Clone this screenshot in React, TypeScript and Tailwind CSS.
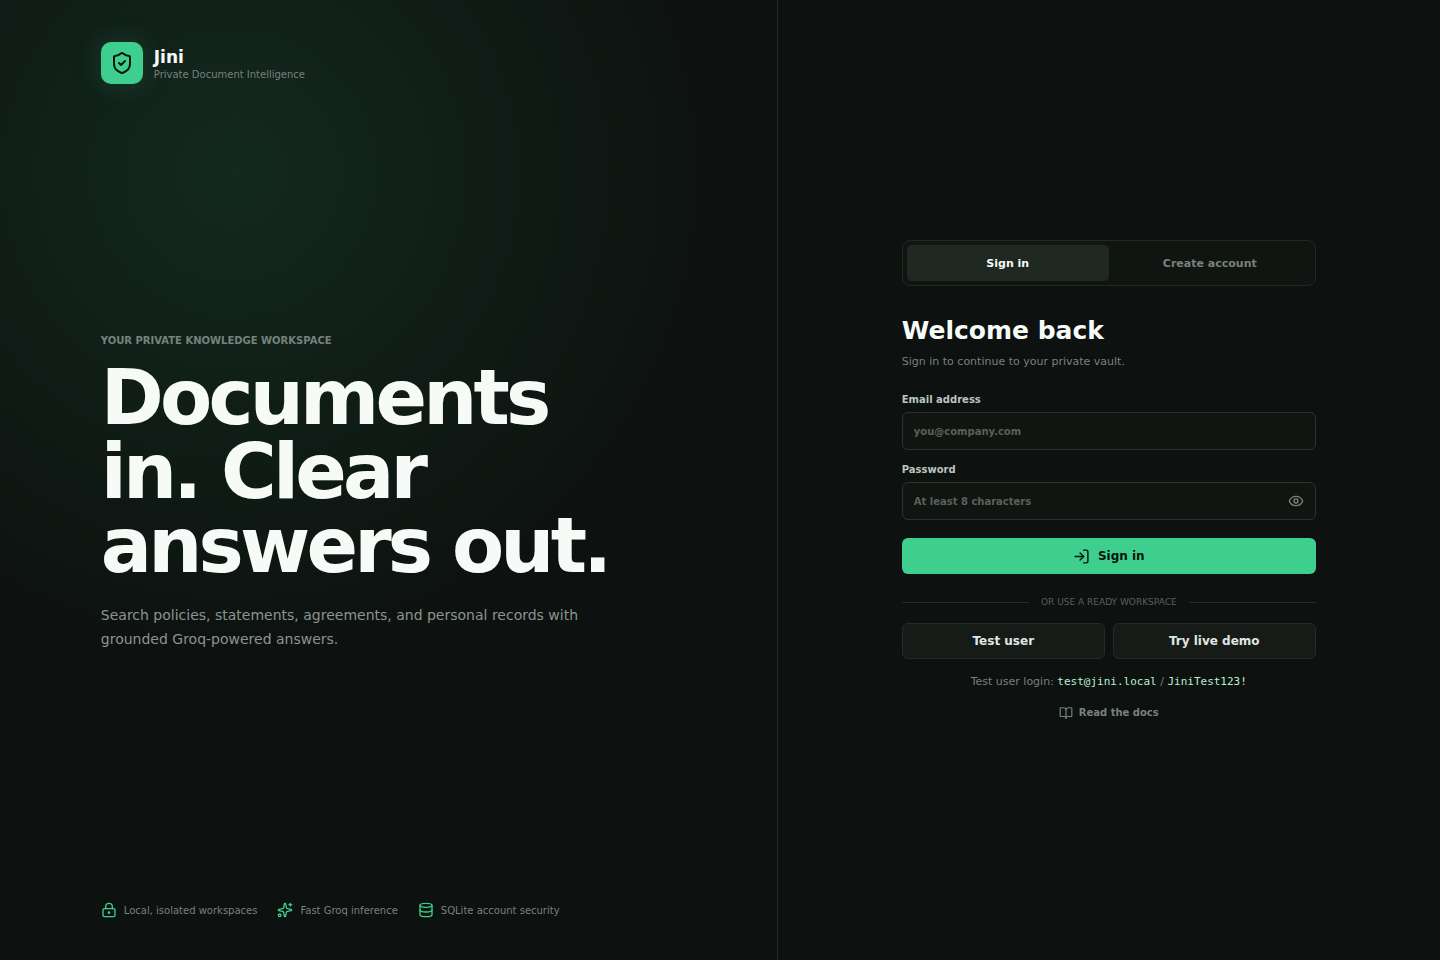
import { useState } from "react";
import { ShieldCheck, LogIn, Eye, EyeOff, BookOpen, Database, LockKeyhole, Sparkles } from "lucide-react";

const features = [
  { icon: LockKeyhole, label: "Local, isolated workspaces" },
  { icon: Sparkles, label: "Fast Groq inference" },
  { icon: Database, label: "SQLite account security" },
];

export default function App() {
  const [visible, setVisible] = useState(false);
  return (
    <main className="grid min-h-screen grid-cols-[54fr_46fr] bg-[#0d110f] font-['DejaVu_Sans',sans-serif] text-[#f7fbf8]">
      <section className="flex flex-col justify-between border-r border-[#252b28] bg-[radial-gradient(circle_at_30%_18%,#13291f,transparent_52%)] px-[7vw] py-[42px]">
        <header className="flex items-center gap-[11px]">
          <div className="grid size-[42px] place-items-center rounded-[10px] bg-[#3ecf8e] text-[#07130d] shadow-[0_0_28px_rgba(62,207,142,0.18)]">
            <ShieldCheck size={24} />
          </div>
          <div>
            <p className="pt-0.5 text-[17px] leading-[22px] font-bold">Jini</p>
            <p className="text-[10px] leading-[14px] text-[#77827c]">Private Document Intelligence</p>
          </div>
        </header>
        <div className="max-w-[540px]">
          <p className="text-[10px] leading-[12px] font-bold text-[#77827c]">YOUR PRIVATE KNOWLEDGE WORKSPACE</p>
          <h1 className="mt-[14px] text-[76px] leading-[74px] font-bold tracking-tighter">Documents in. Clear answers out.</h1>
          <p className="mt-5 text-[14px] leading-[24px] text-[#8b958f]">Search policies, statements, agreements, and personal records with grounded Groq-powered answers.</p>
        </div>
        <ul className="flex gap-5 text-[10px] text-[#77827c]">
          {features.map(({ icon: Icon, label }) => (
            <li key={label} className="flex items-center gap-[7px]"><Icon size={16} className="text-[#3ecf8e]" />{label}</li>
          ))}
        </ul>
      </section>
      <section className="flex items-center justify-center px-8">
        <div className="w-full max-w-[414px]">
          <div className="grid grid-cols-2 rounded-lg border border-[#222925] bg-[#111512] p-1 text-[11px] leading-[17px] font-bold">
            <button type="button" className="h-9 rounded-[5px] bg-[#202822]">Sign in</button>
            <button type="button" className="h-9 text-[#77827c]">Create account</button>
          </div>
          <h2 className="mt-7 text-[25px] leading-[34px] font-bold">Welcome back</h2>
          <p className="mt-[5px] text-[11px] leading-[17px] text-[#77827c]">Sign in to continue to your private vault.</p>
          <form onSubmit={(e) => e.preventDefault()} className="mt-6 text-[10px] font-bold">
            <label htmlFor="email" className="block leading-[12px] text-[#bcc5bf]">Email address</label>
            <input id="email" type="email" placeholder="you@company.com" className="mt-1.5 block h-[38px] w-full rounded-md border border-[#2c332f] bg-[#111512] px-[11px] placeholder:text-[#58615c]" />
            <label htmlFor="password" className="mt-[14px] block leading-[12px] text-[#bcc5bf]">Password</label>
            <div className="relative mt-1.5">
              <input id="password" type={visible ? "text" : "password"} placeholder="At least 8 characters" className="block h-[38px] w-full rounded-md border border-[#2c332f] bg-[#111512] pr-10 pl-[11px] placeholder:text-[#58615c]" />
              <button type="button" aria-label={visible ? "Hide password" : "Show password"} onClick={() => setVisible(!visible)} className="absolute inset-y-0 right-3 text-[#77827c]">{visible ? <EyeOff size={16} /> : <Eye size={16} />}</button>
            </div>
            <button type="submit" className="mt-[18px] flex h-9 w-full items-center justify-center gap-2 rounded-md bg-[#3ecf8e] text-[12px] text-[#07130d]"><LogIn size={17} />Sign in</button>
          </form>
          <div className="mt-[21px] flex items-center gap-3 text-[9px] leading-[14px] text-[#58615c]"><hr className="grow border-[#252b28]" />OR USE A READY WORKSPACE<hr className="grow border-[#252b28]" /></div>
          <div className="mt-[14px] grid grid-cols-2 gap-2 text-[12px] font-bold text-[#dfe7e2]">
            <button type="button" className="h-9 rounded-md border border-[#252b28] bg-[#171b18]">Test user</button>
            <button type="button" className="h-9 rounded-md border border-[#252b28] bg-[#171b18]">Try live demo</button>
          </div>
          <p className="mt-[14px] text-center text-[11px] leading-[17px] text-[#77827c]">Test user login: <code className="font-['DejaVu_Sans_Mono',monospace] text-[#b8efd1]">test@jini.local</code> / <code className="font-['DejaVu_Sans_Mono',monospace] text-[#b8efd1]">JiniTest123!</code></p>
          <a href="#docs" className="mt-[15px] flex items-center justify-center gap-1.5 text-[10px] leading-[15px] font-bold text-[#77827c]"><BookOpen size={14} />Read the docs</a>
        </div>
      </section>
    </main>
  );
}
